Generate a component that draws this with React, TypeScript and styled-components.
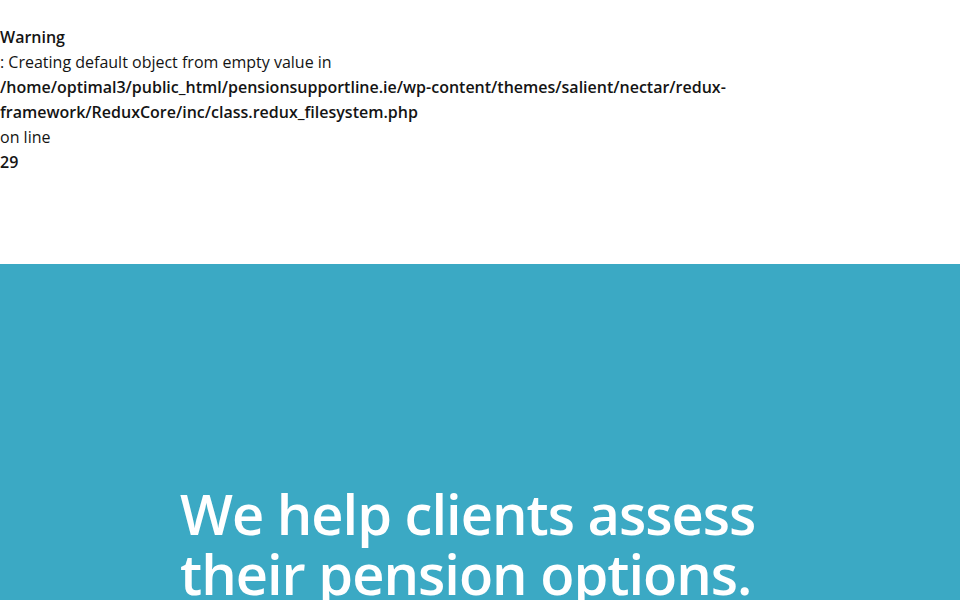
import React from 'react';
import styled, { createGlobalStyle } from 'styled-components';

const GlobalStyle = createGlobalStyle`
  html, body {
    margin: 0;
    padding: 0;
    background: #ffffff;
  }
  body {
    font-family: "Open Sans", "Liberation Sans", sans-serif;
    overflow: hidden;
  }
`

const Notice = styled.div`
  padding-top: 25px;
  height: 239px;
  font-size: 16px;
  line-height: 25px;
  color: #141414;
`

const Line = styled.div<{ $bold?: boolean }>`
  font-weight: ${p => (p.$bold ? 600 : 400)};
  white-space: nowrap;
`

const Hero = styled.section`
  background: #3ba9c4;
  min-height: 400px;
  padding: 219px 0 0 180px;
`

const Heading = styled.h1`
  margin: 0;
  color: #ffffff;
  font-size: 56px;
  line-height: 60px;
  font-weight: 600;
  letter-spacing: -1px;
  white-space: nowrap;
`

const App: React.FC = () => {
  return (
    <>
      <GlobalStyle />
      <Notice>
        <Line $bold>Warning</Line>
        <Line>: Creating default object from empty value in</Line>
        <Line $bold>/home/optimal3/public_html/pensionsupportline.ie/wp-content/themes/salient/nectar/redux-</Line>
        <Line $bold>framework/ReduxCore/inc/class.redux_filesystem.php</Line>
        <Line>on line</Line>
        <Line $bold>29</Line>
      </Notice>
      <Hero>
        <Heading>
          We help clients assess<br />
          their pension options.
        </Heading>
      </Hero>
    </>
  );
}

export default App;
